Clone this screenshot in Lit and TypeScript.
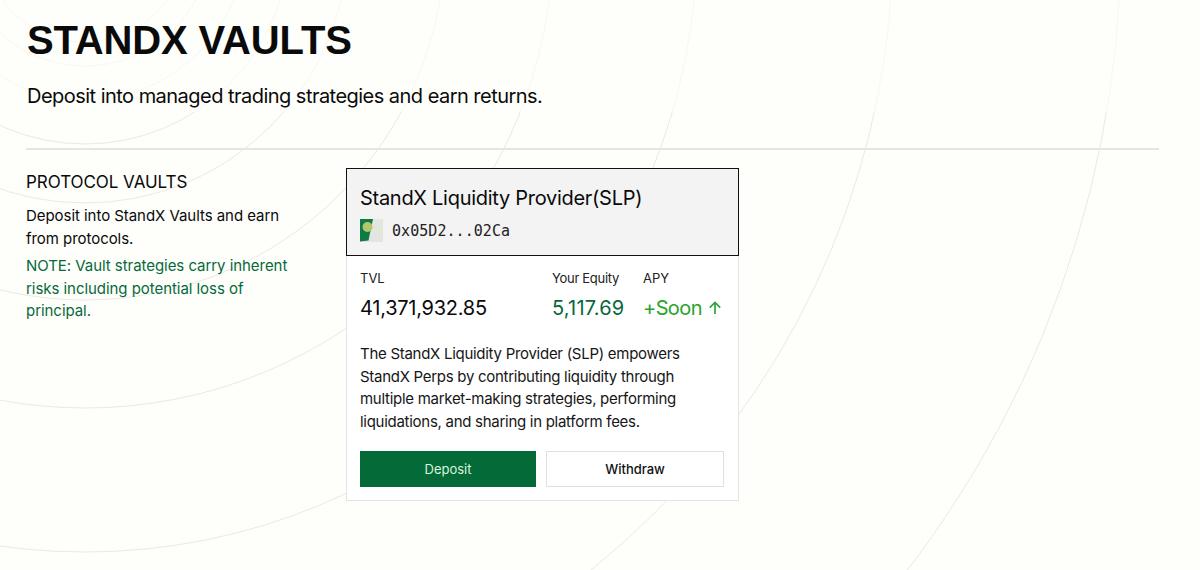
import { LitElement, html, css, svg } from "lit";
import { customElement } from "lit/decorators.js";

// radii of the rings behind the page, all around one centre off the top edge
const RINGS = [102, 126, 160, 204, 263, 360, 468, 612, 808, 1036];

@customElement("app-root")
export class AppRoot extends LitElement {
  static styles = css`
    :host {
      display: block;
      position: relative;
      width: 1200px;
      height: 570px;
      overflow: hidden;
      background: #fefefb;
      color: #0a0a0a;
      font-family: Inter, "Liberation Sans", sans-serif;
    }
    .rings {
      position: absolute;
      inset: 0;
    }
    .rings circle {
      fill: none;
      stroke: #e9e9e5;
      stroke-width: 1;
    }
    .page {
      position: relative;
      display: flex;
      flex-direction: column;
    }
    .head {
      height: 112px;
      padding: 15px 27px 0;
      box-sizing: border-box;
      background: rgba(254, 254, 251, 0.65);
    }
    h1 {
      margin: 0;
      font-family: "Liberation Sans", Arial, sans-serif;
      font-size: 40px;
      line-height: 50px;
      font-weight: 700;
      letter-spacing: -0.15px;
    }
    .sub {
      margin: 17px 0 0;
      font-size: 20px;
      line-height: 28px;
      letter-spacing: -0.53px;
    }
    .rule {
      height: 2px;
      margin: 36px 41px 0 26px;
      background: #e6e6e1;
    }
    .main {
      display: grid;
      grid-template-columns: 320px 393px;
      padding: 18px 0 0 26px;
    }
    .side {
      width: 270px;
    }
    h2 {
      margin: 4px 0 0;
      font-size: 17px;
      line-height: 20px;
      font-weight: 400;
      letter-spacing: -0.05px;
    }
    .side p {
      margin: 13px 0 0;
      font-size: 15px;
      line-height: 22.6px;
      letter-spacing: -0.05px;
    }
    .side .note {
      margin-top: 5px;
      color: #06693a;
    }
    .card {
      background: #fff;
      border: 1px solid #e4e4e4;
      border-top: 0;
      box-sizing: border-box;
      height: 333px;
    }
    .top {
      margin: 0 -1px;
      height: 88px;
      box-sizing: border-box;
      padding: 16px 13px 0;
      background: #f3f3f4;
      border: 1.5px solid #111;
    }
    .name {
      font-size: 20px;
      line-height: 27px;
      font-weight: 400;
      letter-spacing: -0.28px;
    }
    .addr {
      display: flex;
      align-items: center;
      gap: 9px;
      margin-top: 7px;
      font-family: "DejaVu Sans Mono", monospace;
      font-size: 15px;
      letter-spacing: 0.05px;
      color: #222;
    }
    .addr svg {
      display: block;
    }
    .stats {
      display: grid;
      grid-template-columns: 192px 91px 1fr;
      padding: 13px 14px 0 14px;
      margin-left: -1px;
    }
    .label {
      font-size: 13px;
      line-height: 18px;
      color: #222;
    }
    .eqlabel {
      letter-spacing: -0.3px;
    }
    .val {
      margin-top: 7px;
      font-size: 20px;
      line-height: 28px;
    }
    .tvl {
      letter-spacing: -0.25px;
    }
    .eq {
      color: #06693a;
      letter-spacing: 0.2px;
    }
    .apy {
      display: flex;
      align-items: center;
      gap: 6px;
      color: #27a32d;
      letter-spacing: -0.6px;
    }
    .desc {
      margin: 21px 13px 0;
      font-size: 15px;
      line-height: 22.7px;
      letter-spacing: -0.28px;
      color: #161616;
    }
    .btns {
      display: grid;
      grid-template-columns: 176px 178px;
      gap: 10px;
      margin: 17px 13px 0;
    }
    .btn {
      height: 36px;
      box-sizing: border-box;
      display: flex;
      align-items: center;
      justify-content: center;
      font-size: 13px;
    }
    .primary {
      background: #046a38;
      color: #d9f5dd;
    }
    .ghost {
      background: #fff;
      border: 1px solid #e0e0e0;
      color: #111;
      font-weight: 500;
    }
  `;

  render() {
    return html`
      <svg class="rings" width="1200" height="570" viewBox="0 0 1200 570">
        ${RINGS.map((r) => svg`<circle cx="85" cy="-60" r=${r}></circle>`)}
      </svg>
      <div class="page">
        <div class="head">
          <h1>STANDX VAULTS</h1>
          <p class="sub">Deposit into managed trading strategies and earn returns.</p>
        </div>
        <div class="rule"></div>
        <div class="main">
          <div class="side">
            <h2>PROTOCOL VAULTS</h2>
            <p>Deposit into StandX Vaults and earn from protocols.</p>
            <p class="note">NOTE: Vault strategies carry inherent risks including potential loss of principal.</p>
          </div>
          <div class="card">
            <div class="top">
              <div class="name">StandX Liquidity Provider(SLP)</div>
              <div class="addr">
                <svg width="23" height="23" viewBox="0 0 23 23">
                  <rect width="23" height="23" fill="#e3e5e1"></rect>
                  <path d="M0 0H13L8.5 21.5L0 22.5Z" fill="#0f7a45"></path>
                  <path d="M8 4L23 14" stroke="#e9e9b0" stroke-width="1"></path>
                  <circle cx="7.5" cy="8" r="5" fill="#b3c66a"></circle>
                </svg>
                <span>0x05D2...02Ca</span>
              </div>
            </div>
            <div class="stats">
              <div>
                <div class="label">TVL</div>
                <div class="val tvl">41,371,932.85</div>
              </div>
              <div>
                <div class="label eqlabel">Your Equity</div>
                <div class="val eq">5,117.69</div>
              </div>
              <div>
                <div class="label">APY</div>
                <div class="val apy">
                  +Soon
                  <svg width="14" height="14" viewBox="0 0 14 14" fill="none" stroke="#2fa13f" stroke-width="1.7">
                    <path d="M7 13V1.5M1.8 6.7L7 1.5L12.2 6.7"></path>
                  </svg>
                </div>
              </div>
            </div>
            <p class="desc">The StandX Liquidity Provider (SLP) empowers StandX Perps by contributing liquidity through multiple market-making strategies, performing liquidations, and sharing in platform fees.</p>
            <div class="btns">
              <div class="btn primary">Deposit</div>
              <div class="btn ghost">Withdraw</div>
            </div>
          </div>
        </div>
      </div>
    `;
  }
}
